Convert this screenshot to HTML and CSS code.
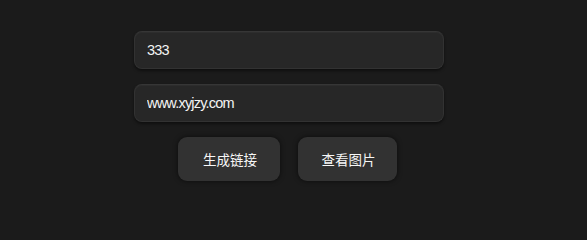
FILE: index.html
```html
<!DOCTYPE html>
<html lang="zh">
<head>
<meta charset="utf-8">
<link rel="stylesheet" href="styles.css">
</head>
<body>
<main class="form">
  <input class="field" type="text" value="333">
  <input class="field" type="text" value="www.xyjzy.com">
  <div class="actions">
    <button class="btn btn-gen">生成链接</button>
    <button class="btn btn-view">查看图片</button>
  </div>
</main>
</body>
</html>
```
FILE: styles.css
```css
html, body {
  margin: 0;
  padding: 0;
  background: #1b1b1b;
  height: 100%;
}
body {
  font-family: "Liberation Sans", Arial, "Noto Sans CJK SC", sans-serif;
}
.form {
  width: 310px;
  margin-left: 134px;
  padding-top: 31px;
  display: flex;
  flex-direction: column;
  gap: 15px;
}
.field {
  box-sizing: border-box;
  width: 310px;
  height: 38px;
  padding: 0 12px;
  background: #272727;
  border: 1px solid #323232;
  border-top-color: #363636;
  border-radius: 8px;
  color: #f4f4f4;
  font-family: "Liberation Sans", Arial, sans-serif;
  font-size: 14.5px;
  letter-spacing: -0.8px;
  outline: none;
  box-shadow: 0 2px 3px rgba(0,0,0,0.45), inset 0 1px 0 rgba(255,255,255,0.03);
}
.actions {
  display: flex;
  justify-content: center;
  gap: 18px;
  padding-right: 3px;
}
.btn {
  box-sizing: border-box;
  height: 44px;
  border: none;
  border-radius: 9px;
  background: #323232;
  color: #f7f7f7;
  font-family: "Noto Sans CJK SC", "Liberation Sans", sans-serif;
  font-size: 13.5px;
  padding: 0 0 0 2px;
  box-shadow: 0 0 5px rgba(0,0,0,0.6);
}
.btn-gen { width: 102px; }
.btn-view { width: 99px; }
```
